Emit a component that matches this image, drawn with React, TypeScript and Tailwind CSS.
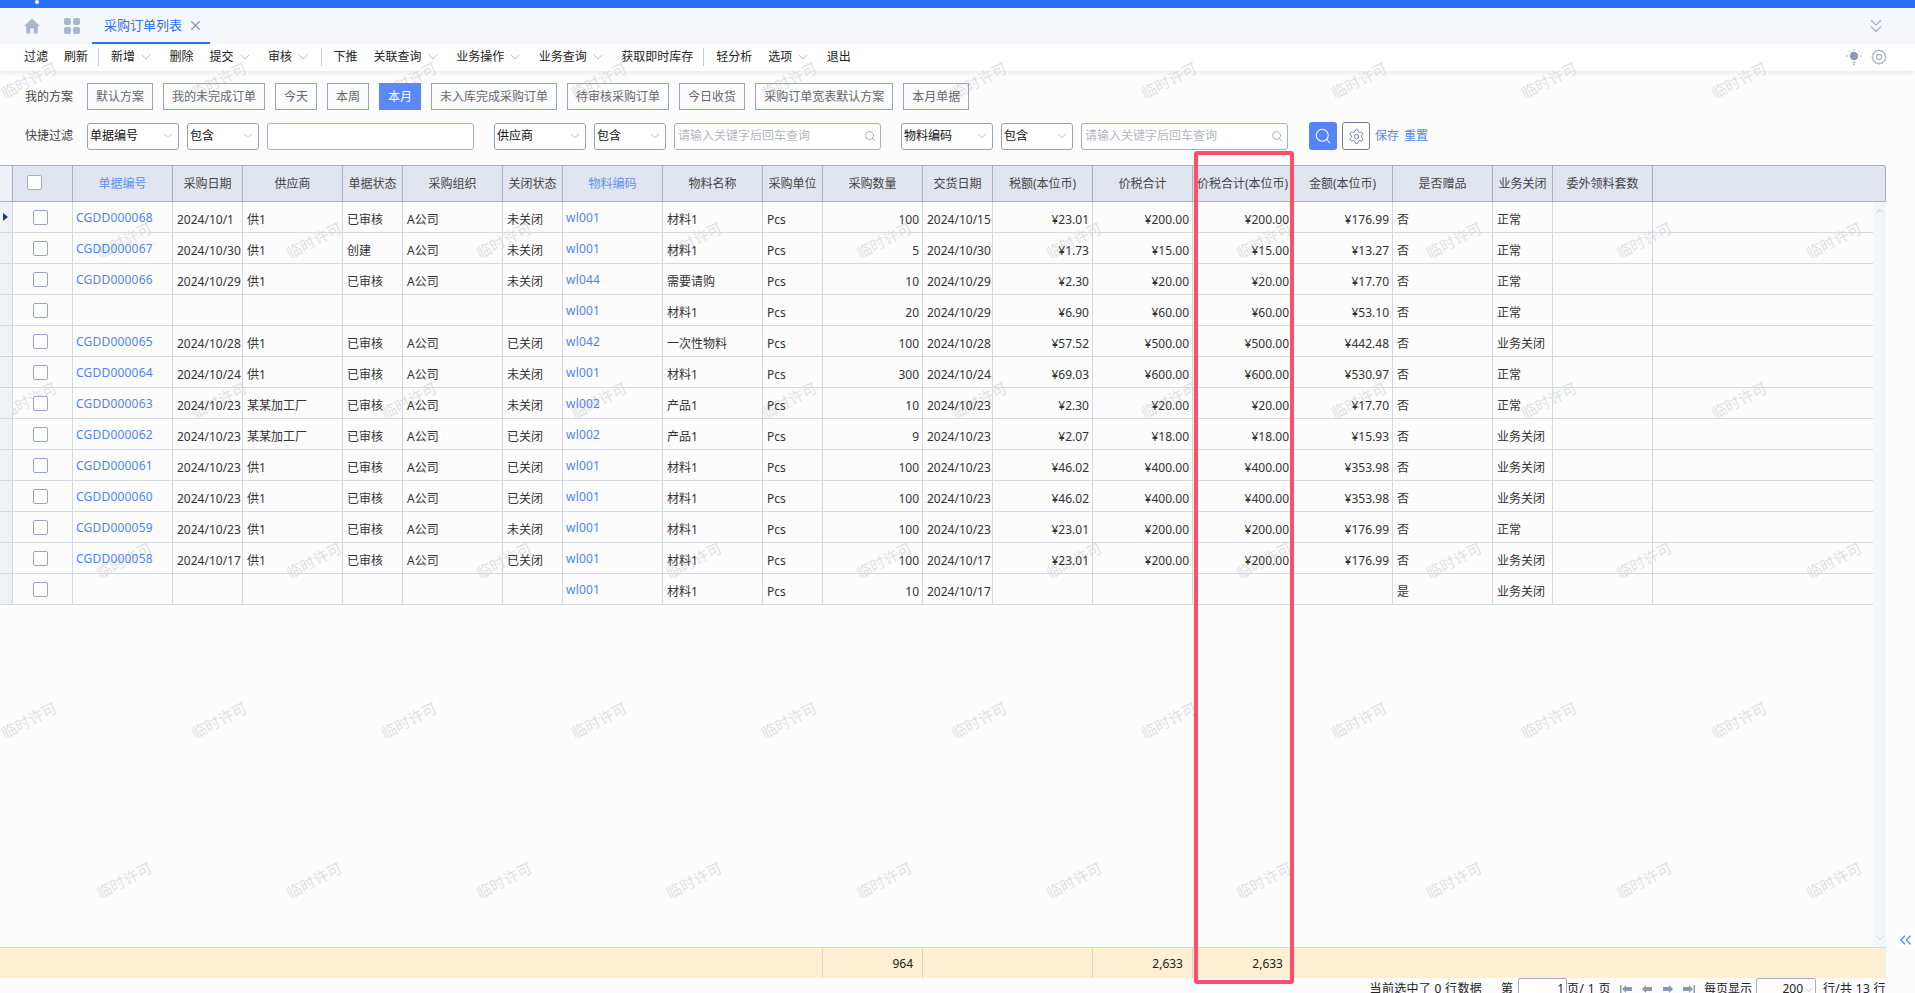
import { ChevronDown, ChevronUp, ChevronsDown, ChevronsLeft, Search, Settings, X } from "lucide-react"

const gridCols =
  "grid grid-cols-[13px_60px_100px_70px_100px_60px_100px_60px_100px_100px_60px_100px_70px_100px_100px_100px_100px_100px_60px_100px_1fr]"

const headers = [
  { t: "单据编号", link: true },
  { t: "采购日期" },
  { t: "供应商" },
  { t: "单据状态" },
  { t: "采购组织" },
  { t: "关闭状态" },
  { t: "物料编码", link: true },
  { t: "物料名称" },
  { t: "采购单位" },
  { t: "采购数量" },
  { t: "交货日期" },
  { t: "税额(本位币)" },
  { t: "价税合计" },
  { t: "价税合计(本位币)" },
  { t: "金额(本位币)" },
  { t: "是否赠品" },
  { t: "业务关闭" },
  { t: "委外领料套数" },
]

type Row = {
  no?: string
  date?: string
  vendor?: string
  state?: string
  org?: string
  close?: string
  code: string
  name: string
  qty: string
  due: string
  tax?: string
  total?: string
  totalBase?: string
  amount?: string
  gift: string
  biz: string
}

const rows: Row[] = [
  { no: "CGDD000068", date: "2024/10/1", vendor: "供1", state: "已审核", org: "A公司", close: "未关闭", code: "wl001", name: "材料1", qty: "100", due: "2024/10/15", tax: "¥23.01", total: "¥200.00", totalBase: "¥200.00", amount: "¥176.99", gift: "否", biz: "正常" },
  { no: "CGDD000067", date: "2024/10/30", vendor: "供1", state: "创建", org: "A公司", close: "未关闭", code: "wl001", name: "材料1", qty: "5", due: "2024/10/30", tax: "¥1.73", total: "¥15.00", totalBase: "¥15.00", amount: "¥13.27", gift: "否", biz: "正常" },
  { no: "CGDD000066", date: "2024/10/29", vendor: "供1", state: "已审核", org: "A公司", close: "未关闭", code: "wl044", name: "需要请购", qty: "10", due: "2024/10/29", tax: "¥2.30", total: "¥20.00", totalBase: "¥20.00", amount: "¥17.70", gift: "否", biz: "正常" },
  { code: "wl001", name: "材料1", qty: "20", due: "2024/10/29", tax: "¥6.90", total: "¥60.00", totalBase: "¥60.00", amount: "¥53.10", gift: "否", biz: "正常" },
  { no: "CGDD000065", date: "2024/10/28", vendor: "供1", state: "已审核", org: "A公司", close: "已关闭", code: "wl042", name: "一次性物料", qty: "100", due: "2024/10/28", tax: "¥57.52", total: "¥500.00", totalBase: "¥500.00", amount: "¥442.48", gift: "否", biz: "业务关闭" },
  { no: "CGDD000064", date: "2024/10/24", vendor: "供1", state: "已审核", org: "A公司", close: "未关闭", code: "wl001", name: "材料1", qty: "300", due: "2024/10/24", tax: "¥69.03", total: "¥600.00", totalBase: "¥600.00", amount: "¥530.97", gift: "否", biz: "正常" },
  { no: "CGDD000063", date: "2024/10/23", vendor: "某某加工厂", state: "已审核", org: "A公司", close: "未关闭", code: "wl002", name: "产品1", qty: "10", due: "2024/10/23", tax: "¥2.30", total: "¥20.00", totalBase: "¥20.00", amount: "¥17.70", gift: "否", biz: "正常" },
  { no: "CGDD000062", date: "2024/10/23", vendor: "某某加工厂", state: "已审核", org: "A公司", close: "已关闭", code: "wl002", name: "产品1", qty: "9", due: "2024/10/23", tax: "¥2.07", total: "¥18.00", totalBase: "¥18.00", amount: "¥15.93", gift: "否", biz: "业务关闭" },
  { no: "CGDD000061", date: "2024/10/23", vendor: "供1", state: "已审核", org: "A公司", close: "已关闭", code: "wl001", name: "材料1", qty: "100", due: "2024/10/23", tax: "¥46.02", total: "¥400.00", totalBase: "¥400.00", amount: "¥353.98", gift: "否", biz: "业务关闭" },
  { no: "CGDD000060", date: "2024/10/23", vendor: "供1", state: "已审核", org: "A公司", close: "已关闭", code: "wl001", name: "材料1", qty: "100", due: "2024/10/23", tax: "¥46.02", total: "¥400.00", totalBase: "¥400.00", amount: "¥353.98", gift: "否", biz: "业务关闭" },
  { no: "CGDD000059", date: "2024/10/23", vendor: "供1", state: "已审核", org: "A公司", close: "未关闭", code: "wl001", name: "材料1", qty: "100", due: "2024/10/23", tax: "¥23.01", total: "¥200.00", totalBase: "¥200.00", amount: "¥176.99", gift: "否", biz: "正常" },
  { no: "CGDD000058", date: "2024/10/17", vendor: "供1", state: "已审核", org: "A公司", close: "已关闭", code: "wl001", name: "材料1", qty: "100", due: "2024/10/17", tax: "¥23.01", total: "¥200.00", totalBase: "¥200.00", amount: "¥176.99", gift: "否", biz: "业务关闭" },
  { code: "wl001", name: "材料1", qty: "10", due: "2024/10/17", gift: "是", biz: "业务关闭" },
]

const schemes = ["默认方案", "我的未完成订单", "今天", "本周", "本月", "未入库完成采购订单", "待审核采购订单", "今日收货", "采购订单宽表默认方案", "本月单据"]

function Menu({ label, arrow }: { label: string; arrow?: boolean }) {
  return (
    <div className={arrow ? "flex items-center mr-[15.5px]" : "flex items-center mr-[16px]"}>
      <span className="text-[12px] leading-[16px] text-[#222]">{label}</span>
      {arrow && <ChevronDown className="ml-[3px] h-[16px] w-[16px] text-[#a7b1c6]" strokeWidth={1.1} />}
    </div>
  )
}

function Divider() {
  return <div className="mr-[12px] -ml-[6px] h-[18px] w-px bg-[#c5cfe0]" />
}

function Select({ label, width }: { label: string; width: string }) {
  return (
    <div className={`${width} flex h-[27px] items-center justify-between rounded-[3px] border border-[#97a3bd] bg-white pl-[2px] pr-[3px]`}>
      <span className="text-[12px] leading-[16px] text-[#111]">{label}</span>
      <ChevronDown className="h-[14px] w-[14px] text-[#99a6bf]" strokeWidth={1.2} />
    </div>
  )
}

function KeywordInput() {
  return (
    <div className="flex h-[27px] w-[207px] items-center justify-between rounded-[3px] border border-[#a5afc5] bg-white pl-[3px] pr-[4px]">
      <span className="text-[12px] leading-[16px] text-[#b5b8bf]">请输入关键字后回车查询</span>
      <Search className="h-[12px] w-[12px] text-[#8f99ad]" strokeWidth={1.5} />
    </div>
  )
}

function Checkbox({ header }: { header?: boolean }) {
  return (
    <div
      className={
        header
          ? "ml-[14px] mt-[9px] h-[15px] w-[15px] rounded-[2px] border border-[#a4adc2] bg-white"
          : "ml-[20px] mt-[8px] h-[15px] w-[15px] rounded-[2px] border border-[#98a5c5] bg-white"
      }
    />
  )
}

function TextCell({ value }: { value?: string }) {
  return (
    <div className="overflow-hidden whitespace-nowrap border-r border-[#d6d8df] pl-[4px] pt-[10px] text-[12px] leading-[16px] text-[#333]">
      {value}
    </div>
  )
}

function LinkCell({ value }: { value?: string }) {
  return (
    <div className="overflow-hidden whitespace-nowrap border-r border-[#d6d8df] pl-[3px] pt-[8px] text-[12px] leading-[16px] tracking-[0.2px] text-[#4f84f0]">
      {value}
    </div>
  )
}

function NumCell({ value }: { value?: string }) {
  return (
    <div className="overflow-hidden whitespace-nowrap border-r border-[#d6d8df] pr-[3px] pt-[10px] text-right text-[12px] leading-[16px] text-[#333]">
      {value}
    </div>
  )
}

function SumCell({ value }: { value?: string }) {
  return <div className="border-r border-[#d9d5c8] pr-[9px] pt-[8px] text-right text-[12px] leading-[16px] text-[#222]">{value}</div>
}

function PageArrow({ d }: { d: string }) {
  return (
    <svg viewBox="0 0 12 10" className="h-[10px] w-[12px] text-[#8f99ad]" fill="currentColor">
      <path d={d} />
    </svg>
  )
}

function Watermarks({ offset }: { offset: string }) {
  return (
    <div className={`${offset} flex h-[160px] shrink-0 items-center`}>
      {Array.from({ length: 10 }).map((_, i) => (
        <div key={i} className="flex w-[190px] shrink-0 justify-center">
          <span className="-rotate-[27deg] whitespace-nowrap text-[15px] leading-[20px] text-[#d9d9d9]/80">临时许可</span>
        </div>
      ))}
    </div>
  )
}

export default function App() {
  return (
    <div className="relative flex h-screen w-full flex-col overflow-hidden bg-[#fcfcfd] [font-family:'Noto_Sans','Noto_Sans_CJK_SC',sans-serif]">
      {/* top bar */}
      <div className="h-[8px] shrink-0 bg-[#2a70f6]" />
      <div className="absolute left-[35px] top-0 h-[4px] w-[4px] rounded-full bg-white" />

      {/* tabs */}
      <div className="flex h-[36px] shrink-0 items-center bg-[#f5f7fb]">
        <svg viewBox="0 0 16 16" className="ml-[24px] h-[16px] w-[16px] text-[#a9b6cc]" fill="currentColor">
          <path d="M8 .5 16 8h-2.2v7.5H9.7v-5H6.3v5H2.2V8H0z" />
        </svg>
        <svg viewBox="0 0 16 16" className="ml-[24px] h-[16px] w-[16px] text-[#a9b6cc]" fill="currentColor">
          <rect x="0" y="0" width="7" height="7" rx="2" />
          <rect x="9" y="0" width="7" height="7" rx="2" />
          <rect x="0" y="9" width="7" height="7" rx="2" />
          <rect x="9" y="9" width="7" height="7" rx="2" />
        </svg>
        <div className="ml-[12px] flex h-full w-[118px] items-center border-b-2 border-[#2a70f6] pl-[12px]">
          <span className="text-[13px] leading-[18px] text-[#2a70f6]">采购订单列表</span>
          <X className="ml-[6px] h-[15px] w-[15px] text-[#8d9ab3]" strokeWidth={2.2} />
        </div>
        <ChevronsDown className="ml-auto mr-[28px] h-[22px] w-[22px] text-[#a5b1c8]" strokeWidth={1.4} />
      </div>

      {/* toolbar, the watermark runs over it */}
      <div className="relative z-10 flex h-[27px] shrink-0 items-center bg-white pb-[2px] pl-[24px] shadow-[0_2px_5px_rgba(0,0,0,0.07)]">
        <Menu label="过滤" />
        <Menu label="刷新" />
        <Divider />
        <Menu label="新增" arrow />
        <Menu label="删除" />
        <Menu label="提交" arrow />
        <Menu label="审核" arrow />
        <Divider />
        <Menu label="下推" />
        <Menu label="关联查询" arrow />
        <Menu label="业务操作" arrow />
        <Menu label="业务查询" arrow />
        <Menu label="获取即时库存" />
        <Divider />
        <Menu label="轻分析" />
        <Menu label="选项" arrow />
        <Menu label="退出" />
        <div className="ml-auto mr-[28px] flex items-center gap-[9px]">
          <svg viewBox="0 0 16 16" className="h-[16px] w-[16px] text-[#8c99b5]" stroke="currentColor" fill="none">
            <circle cx="8" cy="7" r="4.2" fill="currentColor" stroke="none" />
            <path d="M8 0v1.4M2.6 1.8l1 1M13.4 1.8l-1 1M.4 7h1.4M14.2 7h1.4M6.4 13.2h3.2M7 15.2h2" strokeWidth="1" />
          </svg>
          <svg viewBox="0 0 16 16" className="h-[16px] w-[16px] text-[#a2adc2]" stroke="currentColor" fill="none" strokeWidth="1.1">
            <path d="M8 1l1.5.9 1.9-.1 1 1.7 1.6 1 0 2 .9 1.5-.9 1.5 0 2-1.6 1-1 1.7-1.9-.1L8 15l-1.5-.9-1.9.1-1-1.7-1.6-1 0-2L1.1 8 2 6.5l0-2 1.6-1 1-1.7 1.9.1z" />
            <circle cx="8" cy="8" r="2.6" />
          </svg>
        </div>
      </div>

      {/* filters */}
      <div className="relative z-20 shrink-0 pl-[25px]">
        <div className="mt-[12px] flex items-center">
          <span className="w-[62px] text-[12px] leading-[16px] text-[#444]">我的方案</span>
          <div className="flex gap-[10px]">
            {schemes.map((s) => (
              <div
                key={s}
                className={
                  s === "本月"
                    ? "flex h-[27px] items-center border border-[#5a88f4] bg-[#5a88f4] px-[8px] text-[12px] leading-[16px] text-white"
                    : "flex h-[27px] items-center border border-[#98a4be] px-[8px] text-[12px] leading-[16px] text-[#666]"
                }
              >
                {s}
              </div>
            ))}
          </div>
        </div>
        <div className="mt-[12px] flex items-center">
          <span className="w-[62px] text-[12px] leading-[16px] text-[#444]">快捷过滤</span>
          <Select label="单据编号" width="w-[92px]" />
          <div className="ml-[8px]">
            <Select label="包含" width="w-[72px]" />
          </div>
          <div className="ml-[8px] h-[27px] w-[207px] rounded-[3px] border border-[#a5afc5] bg-white" />
          <div className="ml-[20px]">
            <Select label="供应商" width="w-[92px]" />
          </div>
          <div className="ml-[8px]">
            <Select label="包含" width="w-[72px]" />
          </div>
          <div className="ml-[8px]">
            <KeywordInput />
          </div>
          <div className="ml-[20px]">
            <Select label="物料编码" width="w-[92px]" />
          </div>
          <div className="ml-[8px]">
            <Select label="包含" width="w-[72px]" />
          </div>
          <div className="ml-[8px]">
            <KeywordInput />
          </div>
          <div className="ml-[21px] flex h-[28px] w-[28px] items-center justify-center rounded-[3px] bg-[#5585f5]">
            <Search className="h-[18px] w-[18px] text-white" strokeWidth={1.4} />
          </div>
          <div className="ml-[5px] flex h-[28px] w-[28px] items-center justify-center rounded-[3px] border border-[#737d96] bg-white">
            <Settings className="h-[17px] w-[17px] text-[#737d96]" strokeWidth={1.4} />
          </div>
          <span className="ml-[5px] text-[12px] leading-[16px] text-[#5a88f4]">保存</span>
          <span className="ml-[5px] text-[12px] leading-[16px] text-[#4f7ff0]">重置</span>
        </div>
      </div>

      {/* table */}
      <div className="relative z-20 mt-[15px] flex min-h-0 flex-1 flex-col pr-[29px]">
        <div className={`${gridCols} h-[37px] shrink-0 rounded-tr-[3px] border-y border-r border-[#a9b0c1] bg-[#e1e5ef]`}>
          <div className="border-r border-[#a9b0c1] bg-[#eef0f5]" />
          <div className="border-r border-[#a9b0c1]">
            <Checkbox header />
          </div>
          {headers.map((h) => (
            <div
              key={h.t}
              className={
                h.link
                  ? "overflow-hidden whitespace-nowrap border-r border-[#a9b0c1] pt-[10px] text-center text-[12px] leading-[16px] text-[#5f8ff5]"
                  : "overflow-hidden whitespace-nowrap border-r border-[#a9b0c1] pt-[10px] text-center text-[12px] leading-[16px] text-[#444]"
              }
            >
              {h.t}
            </div>
          ))}
          <div />
        </div>

        <div className="flex min-h-0 flex-1">
          <div className="min-w-0 flex-1">
            {rows.map((r, i) => (
              <div key={i} className={`${gridCols} relative h-[31px] border-b border-[#d6d8df]`}>
                <div className="border-r border-[#d6d8df] bg-[#eff1f6]">
                  {i === 0 && (
                    <svg viewBox="0 0 5 8" className="ml-[3px] mt-[11px] h-[8px] w-[5px] text-[#1c3a78]" fill="currentColor">
                      <path d="M0 0l5 4-5 4z" />
                    </svg>
                  )}
                </div>
                <div className="border-r border-[#d6d8df]">
                  <Checkbox />
                </div>
                <LinkCell value={r.no} />
                <TextCell value={r.date} />
                <TextCell value={r.vendor} />
                <TextCell value={r.state} />
                <TextCell value={r.org} />
                <TextCell value={r.close} />
                <LinkCell value={r.code} />
                <TextCell value={r.name} />
                <TextCell value="Pcs" />
                <NumCell value={r.qty} />
                <TextCell value={r.due} />
                <NumCell value={r.tax} />
                <NumCell value={r.total} />
                <NumCell value={r.totalBase} />
                <NumCell value={r.amount} />
                <TextCell value={r.gift} />
                <TextCell value={r.biz} />
                <TextCell />
                <div />
              </div>
            ))}
          </div>
          <div className="flex w-[13px] shrink-0 flex-col items-center justify-between bg-[#f3f6fb] py-[3px]">
            <ChevronUp className="h-[12px] w-[12px] text-[#b3bccd]" strokeWidth={1.4} />
            <ChevronDown className="h-[12px] w-[12px] text-[#b3bccd]" strokeWidth={1.4} />
          </div>
        </div>

        {/* summary */}
        <div className={`${gridCols} h-[31px] shrink-0 border-t border-[#d3d7e0] bg-[#fdeed4]`}>
          <div className="col-span-11 border-r border-[#d9d5c8]" />
          <SumCell value="964" />
          <div className="col-span-2 border-r border-[#d9d5c8]" />
          <SumCell value="2,633" />
          <SumCell value="2,633" />
        </div>

        {/* pager */}
        <div className="flex h-[15px] shrink-0 items-start justify-end overflow-hidden text-[12px] leading-[16px] text-[#222]">
          <span className="mt-[3px] tracking-[0.3px]">当前选中了 0 行数据</span>
          <span className="ml-[19px] mt-[3px]">第</span>
          <div className="ml-[5px] h-[24px] w-[49px] rounded-[2px] border border-[#a5afc5] bg-white pr-[2px] pt-[2px] text-right">1</div>
          <span className="mt-[3px] tracking-[0.4px]">页/ 1 页</span>
          <div className="ml-[9px] mt-[6px] flex gap-[9px]">
            <PageArrow d="M0 1h1.5v8H0zM2 5l4-4v2h6v4H6v2z" />
            <PageArrow d="M1 5l4-4v2h6v4H5v2z" />
            <PageArrow d="M11 5L7 1v2H1v4h6v2z" />
            <PageArrow d="M12 1h-1.5v8H12zM10 5L6 1v2H0v4h6v2z" />
          </div>
          <span className="ml-[9px] mt-[3px]">每页显示</span>
          <div className="ml-[4px] flex h-[24px] w-[60px] items-start justify-end rounded-[2px] border border-[#a5afc5] bg-white pt-[2px]">
            <span>200</span>
            <ChevronDown className="mt-[3px] h-[12px] w-[12px] text-[#a5afc5]" strokeWidth={1.3} />
          </div>
          <span className="ml-[7px] mt-[3px] w-[63px] whitespace-nowrap tracking-[0.3px]">行/共 13 行</span>
        </div>
      </div>

      {/* collapse handle */}
      <div className="absolute right-0 top-[929px] z-20 flex h-[21px] w-[19px] items-center justify-center rounded-l-[5px] bg-white">
        <ChevronsLeft className="h-[20px] w-[20px] text-[#5a88f4]" strokeWidth={1.5} />
      </div>

      {/* red highlight */}
      <div className="pointer-events-none absolute left-[1194px] top-[151px] z-30 h-[833px] w-[100px] rounded-[3px] border-4 border-[#ff4f66]" />

      {/* watermark */}
      <div className="pointer-events-none absolute inset-0 z-[15] flex flex-col overflow-hidden">
        <Watermarks offset="-ml-[66px]" />
        <Watermarks offset="ml-[29px]" />
        <Watermarks offset="-ml-[66px]" />
        <Watermarks offset="ml-[29px]" />
        <Watermarks offset="-ml-[66px]" />
        <Watermarks offset="ml-[29px]" />
      </div>
    </div>
  )
}
